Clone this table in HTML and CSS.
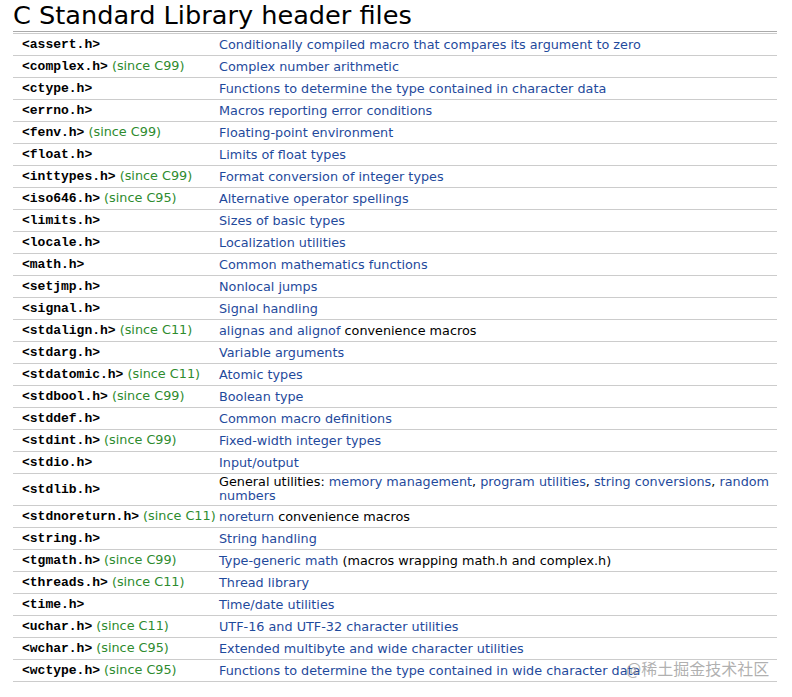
FILE: index.html
```html
<!DOCTYPE html>
<html>
<head>
<meta charset="utf-8">
<link rel="stylesheet" href="styles.css">
</head>
<body>
<div class="page">
<h1 class="title">C Standard Library header files</h1>
<table class="hdr">
<tr><td class="c1"><code>&lt;assert.h&gt;</code></td><td class="c2"><a>Conditionally compiled macro that compares its argument to zero</a></td></tr>
<tr><td class="c1"><code>&lt;complex.h&gt;</code> <span class="since">(since C99)</span></td><td class="c2"><a>Complex number arithmetic</a></td></tr>
<tr><td class="c1"><code>&lt;ctype.h&gt;</code></td><td class="c2"><a>Functions to determine the type contained in character data</a></td></tr>
<tr><td class="c1"><code>&lt;errno.h&gt;</code></td><td class="c2"><a>Macros reporting error conditions</a></td></tr>
<tr><td class="c1"><code>&lt;fenv.h&gt;</code> <span class="since">(since C99)</span></td><td class="c2"><a>Floating-point environment</a></td></tr>
<tr><td class="c1"><code>&lt;float.h&gt;</code></td><td class="c2"><a>Limits of float types</a></td></tr>
<tr><td class="c1"><code>&lt;inttypes.h&gt;</code> <span class="since">(since C99)</span></td><td class="c2"><a>Format conversion of integer types</a></td></tr>
<tr><td class="c1"><code>&lt;iso646.h&gt;</code> <span class="since">(since C95)</span></td><td class="c2"><a>Alternative operator spellings</a></td></tr>
<tr><td class="c1"><code>&lt;limits.h&gt;</code></td><td class="c2"><a>Sizes of basic types</a></td></tr>
<tr><td class="c1"><code>&lt;locale.h&gt;</code></td><td class="c2"><a>Localization utilities</a></td></tr>
<tr><td class="c1"><code>&lt;math.h&gt;</code></td><td class="c2"><a>Common mathematics functions</a></td></tr>
<tr><td class="c1"><code>&lt;setjmp.h&gt;</code></td><td class="c2"><a>Nonlocal jumps</a></td></tr>
<tr><td class="c1"><code>&lt;signal.h&gt;</code></td><td class="c2"><a>Signal handling</a></td></tr>
<tr><td class="c1"><code>&lt;stdalign.h&gt;</code> <span class="since">(since C11)</span></td><td class="c2"><a>alignas</a> <a>and</a> <a>alignof</a> convenience macros</td></tr>
<tr><td class="c1"><code>&lt;stdarg.h&gt;</code></td><td class="c2"><a>Variable arguments</a></td></tr>
<tr><td class="c1"><code>&lt;stdatomic.h&gt;</code> <span class="since">(since C11)</span></td><td class="c2"><a>Atomic types</a></td></tr>
<tr><td class="c1"><code>&lt;stdbool.h&gt;</code> <span class="since">(since C99)</span></td><td class="c2"><a>Boolean type</a></td></tr>
<tr><td class="c1"><code>&lt;stddef.h&gt;</code></td><td class="c2"><a>Common macro definitions</a></td></tr>
<tr><td class="c1"><code>&lt;stdint.h&gt;</code> <span class="since">(since C99)</span></td><td class="c2"><a>Fixed-width integer types</a></td></tr>
<tr><td class="c1"><code>&lt;stdio.h&gt;</code></td><td class="c2"><a>Input/output</a></td></tr>
<tr><td class="c1"><code>&lt;stdlib.h&gt;</code></td><td class="c2 tight">General utilities: <a>memory management</a>, <a>program utilities</a>, <a>string conversions</a>, <a>random numbers</a></td></tr>
<tr><td class="c1"><code>&lt;stdnoreturn.h&gt;</code> <span class="since">(since C11)</span></td><td class="c2"><a>noreturn</a> convenience macros</td></tr>
<tr><td class="c1"><code>&lt;string.h&gt;</code></td><td class="c2"><a>String handling</a></td></tr>
<tr><td class="c1"><code>&lt;tgmath.h&gt;</code> <span class="since">(since C99)</span></td><td class="c2"><a>Type-generic math</a> (macros wrapping math.h and complex.h)</td></tr>
<tr><td class="c1"><code>&lt;threads.h&gt;</code> <span class="since">(since C11)</span></td><td class="c2"><a>Thread library</a></td></tr>
<tr><td class="c1"><code>&lt;time.h&gt;</code></td><td class="c2"><a>Time/date utilities</a></td></tr>
<tr><td class="c1"><code>&lt;uchar.h&gt;</code> <span class="since">(since C11)</span></td><td class="c2"><a>UTF-16 and UTF-32 character utilities</a></td></tr>
<tr><td class="c1"><code>&lt;wchar.h&gt;</code> <span class="since">(since C95)</span></td><td class="c2"><a>Extended multibyte and wide character utilities</a></td></tr>
<tr><td class="c1"><code>&lt;wctype.h&gt;</code> <span class="since">(since C95)</span></td><td class="c2"><a>Functions to determine the type contained in wide character data</a></td></tr>
</table>
</div>
<div class="watermark">@稀土掘金技术社区</div>
</body>
</html>
```
FILE: styles.css
```css
html, body {
  margin: 0;
  padding: 0;
  background: #fff;
}
body {
  font-family: "DejaVu Sans", sans-serif;
  font-size: 12.8px;
  color: #000;
  position: relative;
  min-height: 697px;
}
.page {
  padding: 0 15px 0 13px;
}
.title {
  font-family: "DejaVu Sans", sans-serif;
  font-weight: normal;
  font-size: 25.6px;
  line-height: 28px;
  margin: 0;
  padding-top: 1px;
  padding-bottom: 2px;
  border-bottom: 1px solid #aaa;
}
.hdr {
  width: 100%;
  border-collapse: collapse;
  border-top: 1px solid #ccc;
  margin-top: 1px;
}
.hdr td {
  border-bottom: 1px solid #ccc;
  height: 17px;
  padding: 2px 0;
  line-height: 14px;
  vertical-align: middle;
}
.hdr td.c1 {
  width: 197px;
  padding-left: 9px;
  white-space: nowrap;
}
.hdr td.tight {
  padding: 1px 0 2px;
}
code {
  font-family: "Liberation Mono", monospace;
  font-weight: bold;
  font-size: 13px;
  line-height: 14px;
}
a {
  color: #1f4a9c;
}
.since {
  color: #2e8b2e;
}
.watermark {
  position: absolute;
  left: 626px;
  top: 656px;
  font-family: "Noto Sans CJK SC", sans-serif;
  font-size: 16px;
  color: rgba(150,150,150,0.75);
}
```
